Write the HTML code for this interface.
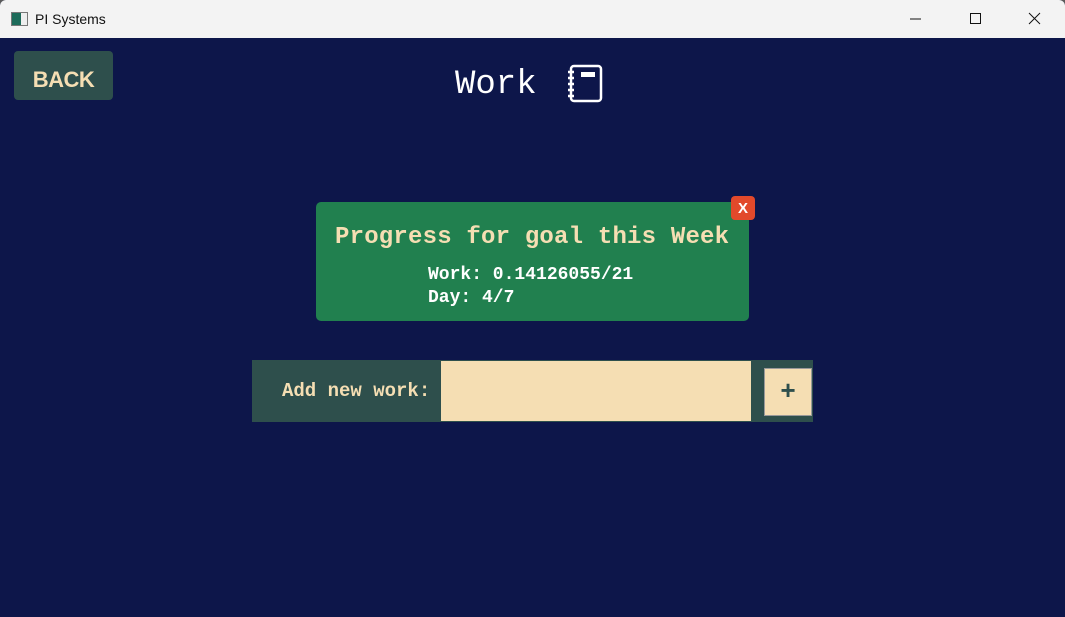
<!DOCTYPE html>
<html><head><style>
body{margin:0;width:1065px;height:617px;overflow:hidden;background:#5a5a5a;font-family:"Liberation Mono",monospace}
.win{position:absolute;left:0;top:0;width:1065px;height:617px;background:#0d164a;border-radius:6px 6px 0 0;overflow:hidden}
.tb{position:absolute;left:0;top:0;width:1065px;height:38px;background:#f3f3f3;font-family:"Liberation Sans",sans-serif;font-size:14px;color:#111}
.ico{position:absolute;left:11px;top:12px;width:15px;height:12px;border:1px solid #777;background:linear-gradient(90deg,#1d6b5a 60%,#eee 60%)}
.tt{position:absolute;left:35px;top:11px}
.back{position:absolute;left:14px;top:51px;width:99px;height:49px;background:#2e4f4c;border-radius:4px;color:#f5deb3;font-family:"Liberation Sans",sans-serif;font-weight:bold;font-size:22px;line-height:57px;text-align:center;letter-spacing:-0.5px}
.h{position:absolute;left:455px;top:66px;color:#fff;font-size:34px}
.card{position:absolute;left:316px;top:202px;width:433px;height:119px;background:#21804f;border-radius:5px}
.ct{position:absolute;left:335px;top:224px;color:#f5deb3;font-size:24px;white-space:pre;font-weight:bold;letter-spacing:0.2px}
.cl{position:absolute;left:428px;top:264px;color:#fff;font-size:18px;line-height:23px;white-space:pre;font-weight:bold}
.x{position:absolute;left:731px;top:196px;width:24px;height:24px;background:#e2492b;border-radius:4px;color:#fff;font-family:"Liberation Sans",sans-serif;font-size:15px;font-weight:bold;line-height:26px;text-align:center}
.row{position:absolute;left:252px;top:360px;width:561px;height:62px;background:#2e4f4c}
.lab{position:absolute;left:282px;top:380px;color:#f5deb3;font-size:19px;font-weight:bold}
.inp{position:absolute;left:441px;top:361px;width:310px;height:60px;background:#f5deb3}
.plus{position:absolute;left:764px;top:368px;width:46px;height:46px;background:#f5deb3;border:1px solid #999;color:#2e4f4c;font-size:26px;line-height:46px;text-align:center;font-weight:bold}
</style></head><body><div class="win">
<div class="tb"><div class="ico"></div><div class="tt">PI Systems</div>
<svg style="position:absolute;left:900px;top:0" width="165" height="38"><path d="M10 19h11" stroke="#111" stroke-width="1"/><rect x="70.5" y="13.5" width="10" height="10" fill="none" stroke="#111"/><path d="M129 13l11 11M140 13l-11 11" stroke="#111"/></svg></div>
<div class="back">BACK</div>
<div class="h">Work</div>
<svg style="position:absolute;left:566px;top:64px" width="38" height="40" viewBox="0 0 38 40" fill="none" stroke="#fff" stroke-width="2.5"><rect x="5" y="2" width="30" height="35" rx="3"/><rect x="15" y="8" width="14" height="5" fill="#fff" stroke="none"/><path d="M2 8h6M2 14h6M2 20h6M2 26h6M2 32h6"/></svg>
<div class="card"></div>
<div class="ct">Progress for goal this Week</div>
<div class="cl">Work: 0.14126055/21
Day: 4/7</div>
<div class="x">X</div>
<div class="row"></div>
<div class="lab">Add new work:</div>
<div class="inp"></div>
<div class="plus">+</div>
</div></body></html>
